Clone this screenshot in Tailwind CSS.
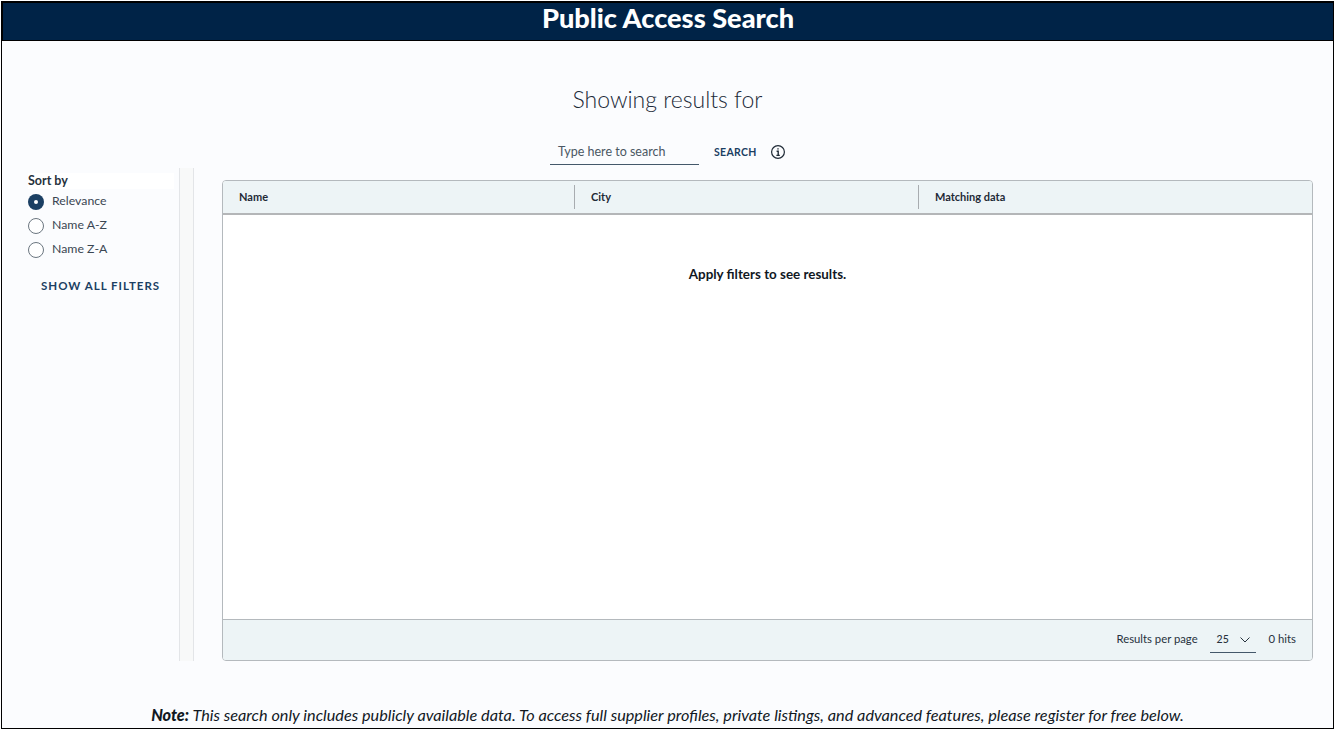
<!DOCTYPE html>
<html lang="en">
<head>
    <meta charset="UTF-8">
    <meta name="viewport" content="width=device-width, initial-scale=1.0">
    <script src="https://cdn.jsdelivr.net/npm/@tailwindcss/browser@4"></script>
    <title>Public Access Search</title>
</head>
<body class="bg-white font-['Lato',sans-serif] overflow-hidden">
    <div class="ml-px mt-px w-[1333px] h-[728px] border border-black bg-[#fbfcfe] overflow-hidden">
        <!-- Title bar -->
        <header class="h-[39px] bg-[#002347] border-t border-l border-black border-b flex items-center justify-center pb-[7px]">
            <h1 class="text-[27.2px] font-black text-white leading-none">Public Access Search</h1>
        </header>

        <h2 class="mt-[43px] text-center text-[23px] font-light leading-[30px] text-[#1b2a38]">Showing results for</h2>

        <!-- Search row -->
        <div class="mt-[25px] h-[26px] flex items-center pl-[548px]">
            <div class="w-[149px] h-[26px] border-b border-[#44586a] pl-2 pt-[1px] text-[12.5px] leading-[24px] text-[#4a5763]">Type here to search</div>
            <button class="ml-[15px] mt-[1px] text-[10.5px] font-bold tracking-[0.3px] text-[#1b3f63]">SEARCH</button>
            <svg class="ml-[13px]" width="16" height="16" viewBox="0 0 16 16" fill="none" stroke="#1f2a36" stroke-width="1.2">
                <circle cx="8" cy="8" r="6.4"/>
                <path d="M8 4.2v1.4M6.6 7.2H8.2V11.3M6.4 11.4h3.4" stroke-width="1.4"/>
            </svg>
        </div>

        <div class="flex mt-[3px]">
            <!-- Sort sidebar -->
            <aside class="w-[177px] pl-[26px] pt-[5px] shrink-0">
                <div class="w-[146px] h-[16px] bg-white text-[12.5px] leading-[16px] font-bold text-[#27323d]">Sort by</div>
                <div class="mt-[1px] flex flex-col">
                    <label class="h-[24px] flex items-center gap-[8px] text-[12.3px] text-[#3a4652]">
                        <span class="w-[16px] h-[16px] rounded-full bg-[#1b3f63] flex items-center justify-center"><span class="w-[4px] h-[4px] rounded-full bg-white"></span></span><span class="mb-[2px]">Relevance</span>
                    </label>
                    <label class="h-[24px] flex items-center gap-[8px] text-[12.3px] text-[#3a4652]">
                        <span class="w-[16px] h-[16px] rounded-full border border-[#6b7680] bg-white"></span><span class="mb-[2px]">Name A-Z</span>
                    </label>
                    <label class="h-[24px] flex items-center gap-[8px] text-[12.3px] text-[#3a4652]">
                        <span class="w-[16px] h-[16px] rounded-full border border-[#6b7680] bg-white"></span><span class="mb-[2px]">Name Z-A</span>
                    </label>
                </div>
                <button class="mt-[15px] ml-[13px] text-[11.5px] font-bold tracking-[1px] text-[#1b3f63]">SHOW ALL FILTERS</button>
            </aside>

            <!-- Divider -->
            <div class="w-[15px] h-[493px] shrink-0 bg-[#f8f9f9] border-x border-[#e3e5e8]"></div>

            <!-- Results table -->
            <section class="ml-[28px] mt-[12px] w-[1091px] h-[481px] border border-[#b4b9bd] rounded-[4px] bg-white flex flex-col overflow-hidden">
                <div class="h-[34px] flex items-center bg-[#edf4f6] border-b-2 border-[#b4b6b8] text-[11px] font-bold text-[#1f2a36] shrink-0">
                    <div class="w-[352px] h-[24px] pl-[16px] flex items-center border-r border-[#a8acb0]">Name</div>
                    <div class="w-[344px] h-[24px] pl-[16px] flex items-center border-r border-[#a8acb0]">City</div>
                    <div class="pl-[16px]">Matching data</div>
                </div>
                <div class="flex-1 pt-[50px] text-center text-[13.4px] font-bold text-[#11181f] leading-[18px]">Apply filters to see results.</div>
                <div class="h-[41px] bg-[#edf4f6] border-t border-[#b4b9bd] flex items-center justify-end pr-[16px] text-[11.3px] text-[#27323d] shrink-0">
                    <span class="mb-[2px]">Results per page</span>
                    <div class="ml-[12px] w-[46px] h-[25px] border-b border-[#44586a] pl-[7px] flex items-center justify-between pr-[6px] text-[10.5px] font-medium">
                        <span>25</span>
                        <svg width="10" height="6" viewBox="0 0 10 6" fill="none" stroke="#27323d" stroke-width="1"><path d="M0.5 0.5L5 5L9.5 0.5"/></svg>
                    </div>
                    <span class="ml-[13px] mb-[2px]">0 hits</span>
                </div>
            </section>
        </div>

        <p class="mt-[45px] text-center text-[16.25px] italic text-[#11181f] leading-[18px]"><b class="font-black">Note:</b> This search only includes publicly available data. To access full supplier profiles, private listings, and advanced features, please register for free below.</p>
    </div>
</body>
</html>
